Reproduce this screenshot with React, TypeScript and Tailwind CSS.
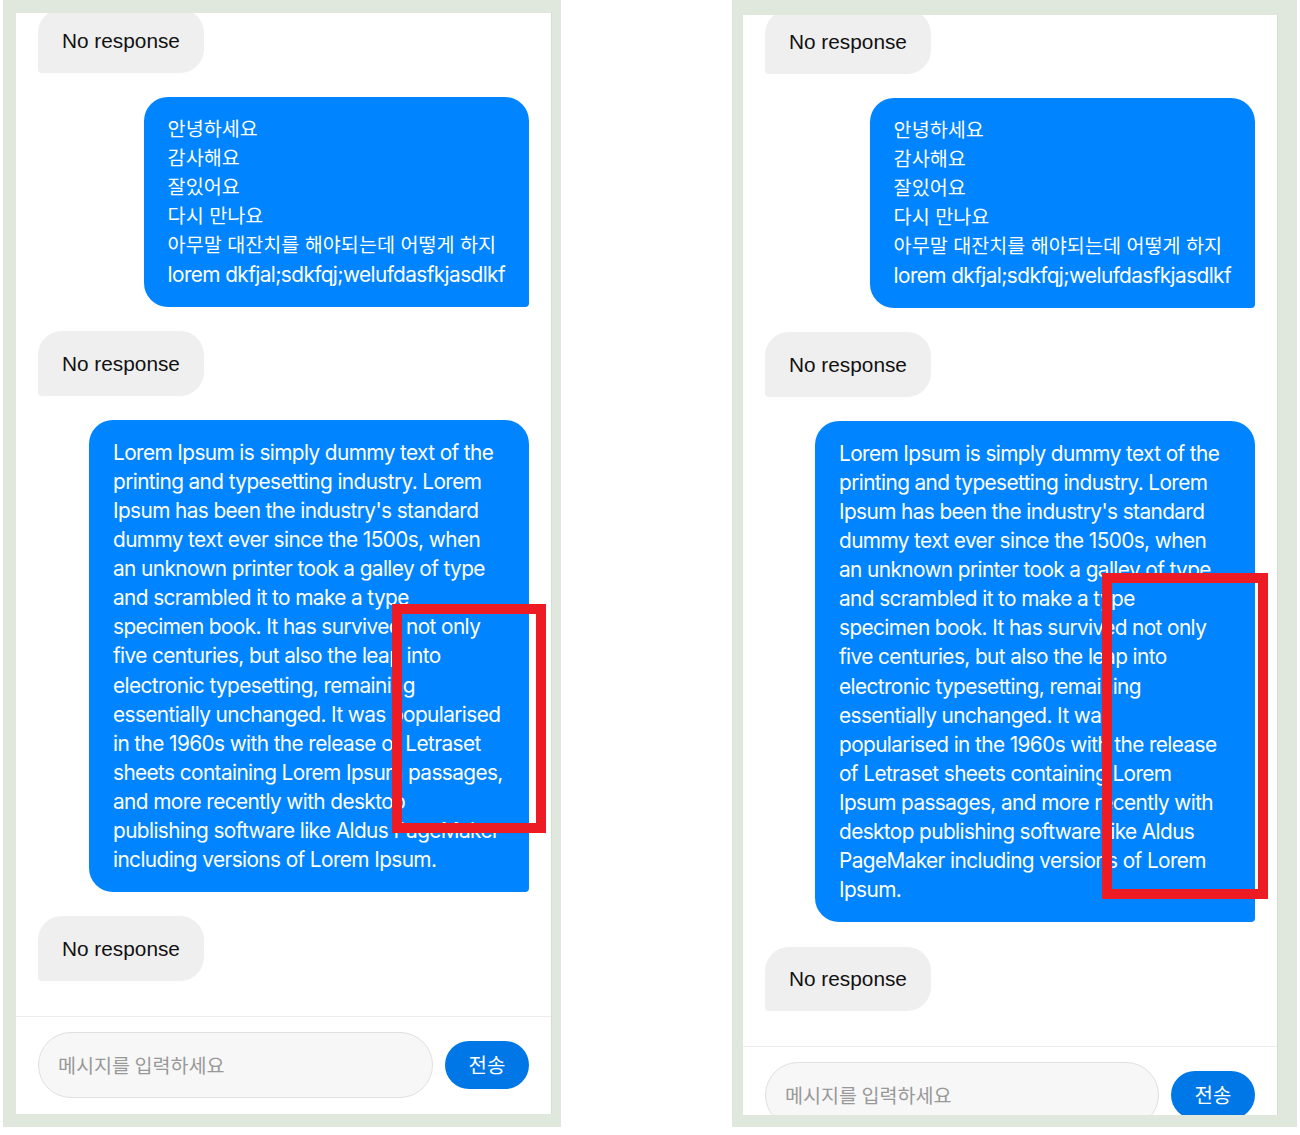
const KOREAN = ['안녕하세요', '감사해요', '잘있어요', '다시 만나요', '아무말 대잔치를 해야되는데 어떻게 하지'];

const LEFT_LOREM = [
  'Lorem Ipsum is simply dummy text of the',
  'printing and typesetting industry. Lorem',
  "Ipsum has been the industry's standard",
  'dummy text ever since the 1500s, when',
  'an unknown printer took a galley of type',
  'and scrambled it to make a type',
  'specimen book. It has survived not only',
  'five centuries, but also the leap into',
  'electronic typesetting, remaining',
  'essentially unchanged. It was popularised',
  'in the 1960s with the release of Letraset',
  'sheets containing Lorem Ipsum passages,',
  'and more recently with desktop',
  'publishing software like Aldus PageMaker',
  'including versions of Lorem Ipsum.',
];

const RIGHT_LOREM = [
  ...LEFT_LOREM.slice(0, 9),
  'essentially unchanged. It was',
  'popularised in the 1960s with the release',
  'of Letraset sheets containing Lorem',
  'Ipsum passages, and more recently with',
  'desktop publishing software like Aldus',
  'PageMaker including versions of Lorem',
  'Ipsum.',
];

function NoResponse() {
  return (
    <div className="w-fit rounded-3xl rounded-bl-[4px] bg-[#efefef] px-6 py-[17.5px] font-['Liberation_Sans',Arial,sans-serif] text-[20.8px] leading-[29.12px] text-[#111]">
      No response
    </div>
  );
}

function Sent({ lines, korean, width = '' }: { lines: string[]; korean?: string[]; width?: string }) {
  return (
    <div
      className={`self-end whitespace-nowrap rounded-3xl rounded-br-[4px] bg-[#0084ff] px-6 py-[17.5px] font-['Inter','Noto_Sans_CJK_KR',sans-serif] text-white ${width}`}
    >
      {korean?.map((l) => (
        <div key={l} className="text-[19.6px] leading-[29.12px]">
          {l}
        </div>
      ))}
      {lines.map((l) => (
        <div key={l} className="text-[20.8px] leading-[29.12px] tracking-[-0.6px]">
          {l}
        </div>
      ))}
    </div>
  );
}

function Composer() {
  return (
    <div className="flex items-center gap-3 border-t border-[#ededed] px-[22px] py-[15px]">
      <div className="flex h-[66px] flex-1 items-center rounded-full border border-[#e0e0e0] bg-[#f7f7f7] pl-[19px] font-['Noto_Sans_CJK_KR',sans-serif] text-[19.6px] text-[#999]">
        메시지를 입력하세요
      </div>
      <button className="flex h-12 w-[84px] items-center justify-center rounded-full bg-[#0077e6] font-['Noto_Sans_CJK_KR',sans-serif] text-[20px] text-white">
        전송
      </button>
    </div>
  );
}

function Messages({ lorem }: { lorem: string[] }) {
  return (
    <div className="flex flex-col gap-[24.5px] px-[22px] pb-[35px]">
      <NoResponse />
      <Sent korean={KOREAN} lines={['lorem dkfjal;sdkfqj;welufdasfkjasdlkf']} />
      <NoResponse />
      <Sent lines={lorem} width="w-[440px]" />
      <NoResponse />
    </div>
  );
}

export default function App() {
  return (
    <div className="relative flex h-[1135px] w-[1300px] items-start gap-[171px] bg-white pl-[3px]">
      {/* before */}
      <div className="h-[1127px] w-[558px] bg-[#e0e7dc] pl-[13px] pt-[13px]">
        <div className="flex h-[1101px] w-[536px] flex-col overflow-hidden border-r border-[#d6dbd3] bg-white">
          <div className="-mt-[4.5px]">
            <Messages lorem={LEFT_LOREM} />
          </div>
          <Composer />
        </div>
      </div>

      {/* after */}
      <div className="h-[1127px] w-[565px] bg-[#e0e7dc] pl-[11px] pt-[15px]">
        <div className="flex h-[1100px] w-[535px] flex-col overflow-hidden border-r border-[#d6dbd3] bg-white">
          <div className="-mt-[5.5px]">
            <Messages lorem={RIGHT_LOREM} />
          </div>
          <Composer />
        </div>
      </div>

      {/* highlight boxes */}
      <div className="absolute left-[392px] top-[604px] h-[229px] w-[154px] border-[10px] border-[#ed1c24]" />
      <div className="absolute left-[1102px] top-[573px] h-[326px] w-[166px] border-[10px] border-[#ed1c24]" />
    </div>
  );
}
